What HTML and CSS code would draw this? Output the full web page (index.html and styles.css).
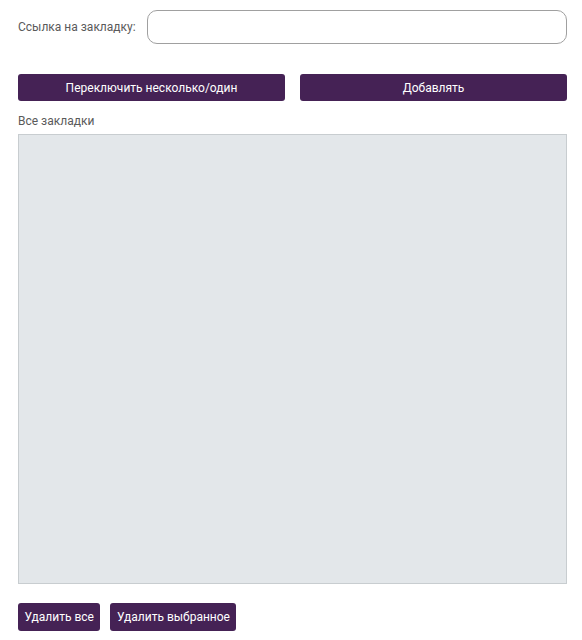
FILE: index.html
```html
<!DOCTYPE html>
<html lang="ru">
<head>
  <meta charset="UTF-8" />
  <meta name="viewport" content="width=device-width, initial-scale=1.0"/>
  <title>Закладки</title>
  <link rel="stylesheet" href="styles.css">
</head>
<body>

  <div class="page">
    <div class="url-row">
      <label for="bookmarkUrl">Ссылка на закладку:</label>
      <input type="text" id="bookmarkUrl" />
    </div>

    <div class="actions">
      <button class="btn">Переключить несколько/один</button>
      <button class="btn">Добавлять</button>
    </div>

    <div class="list-title">Все закладки</div>
    <div class="bookmarks"></div>

    <div class="footer">
      <button class="btn btn-small">Удалить все</button>
      <button class="btn btn-small">Удалить выбранное</button>
    </div>
  </div>

</body>
</html>
```

FILE: styles.css
```css
body {
  margin: 0;
  font-family: Roboto, 'Liberation Sans', sans-serif;
  font-size: 12px;
  color: #5a5a5a;
  background: #fff;
}

.page {
  width: 549px;
  padding: 10px 0 0 18px;
}

.url-row {
  display: flex;
  align-items: center;
  gap: 11px;
}

.url-row label {
  flex: none;
}

.url-row input {
  flex: 1;
  height: 34px;
  box-sizing: border-box;
  border: 1px solid #a0a0a0;
  border-radius: 10px;
  padding: 0 10px;
  font-family: inherit;
  font-size: 12px;
  outline: none;
}

.actions {
  display: grid;
  grid-template-columns: 1fr 1fr;
  gap: 15px;
  margin-top: 30px;
}

.btn {
  background: #452255;
  color: #fff;
  border: none;
  border-radius: 3px;
  height: 27px;
  font-family: inherit;
  font-size: 12px;
  cursor: pointer;
}

.list-title {
  margin-top: 12px;
  line-height: 16px;
}

.bookmarks {
  margin-top: 5px;
  height: 448px;
  background: #e3e7ea;
  border: 1px solid #c8cdd0;
}

.footer {
  display: flex;
  gap: 10px;
  margin-top: 19px;
}

.btn-small {
  height: 28px;
  padding: 0 6.5px;
}
```
